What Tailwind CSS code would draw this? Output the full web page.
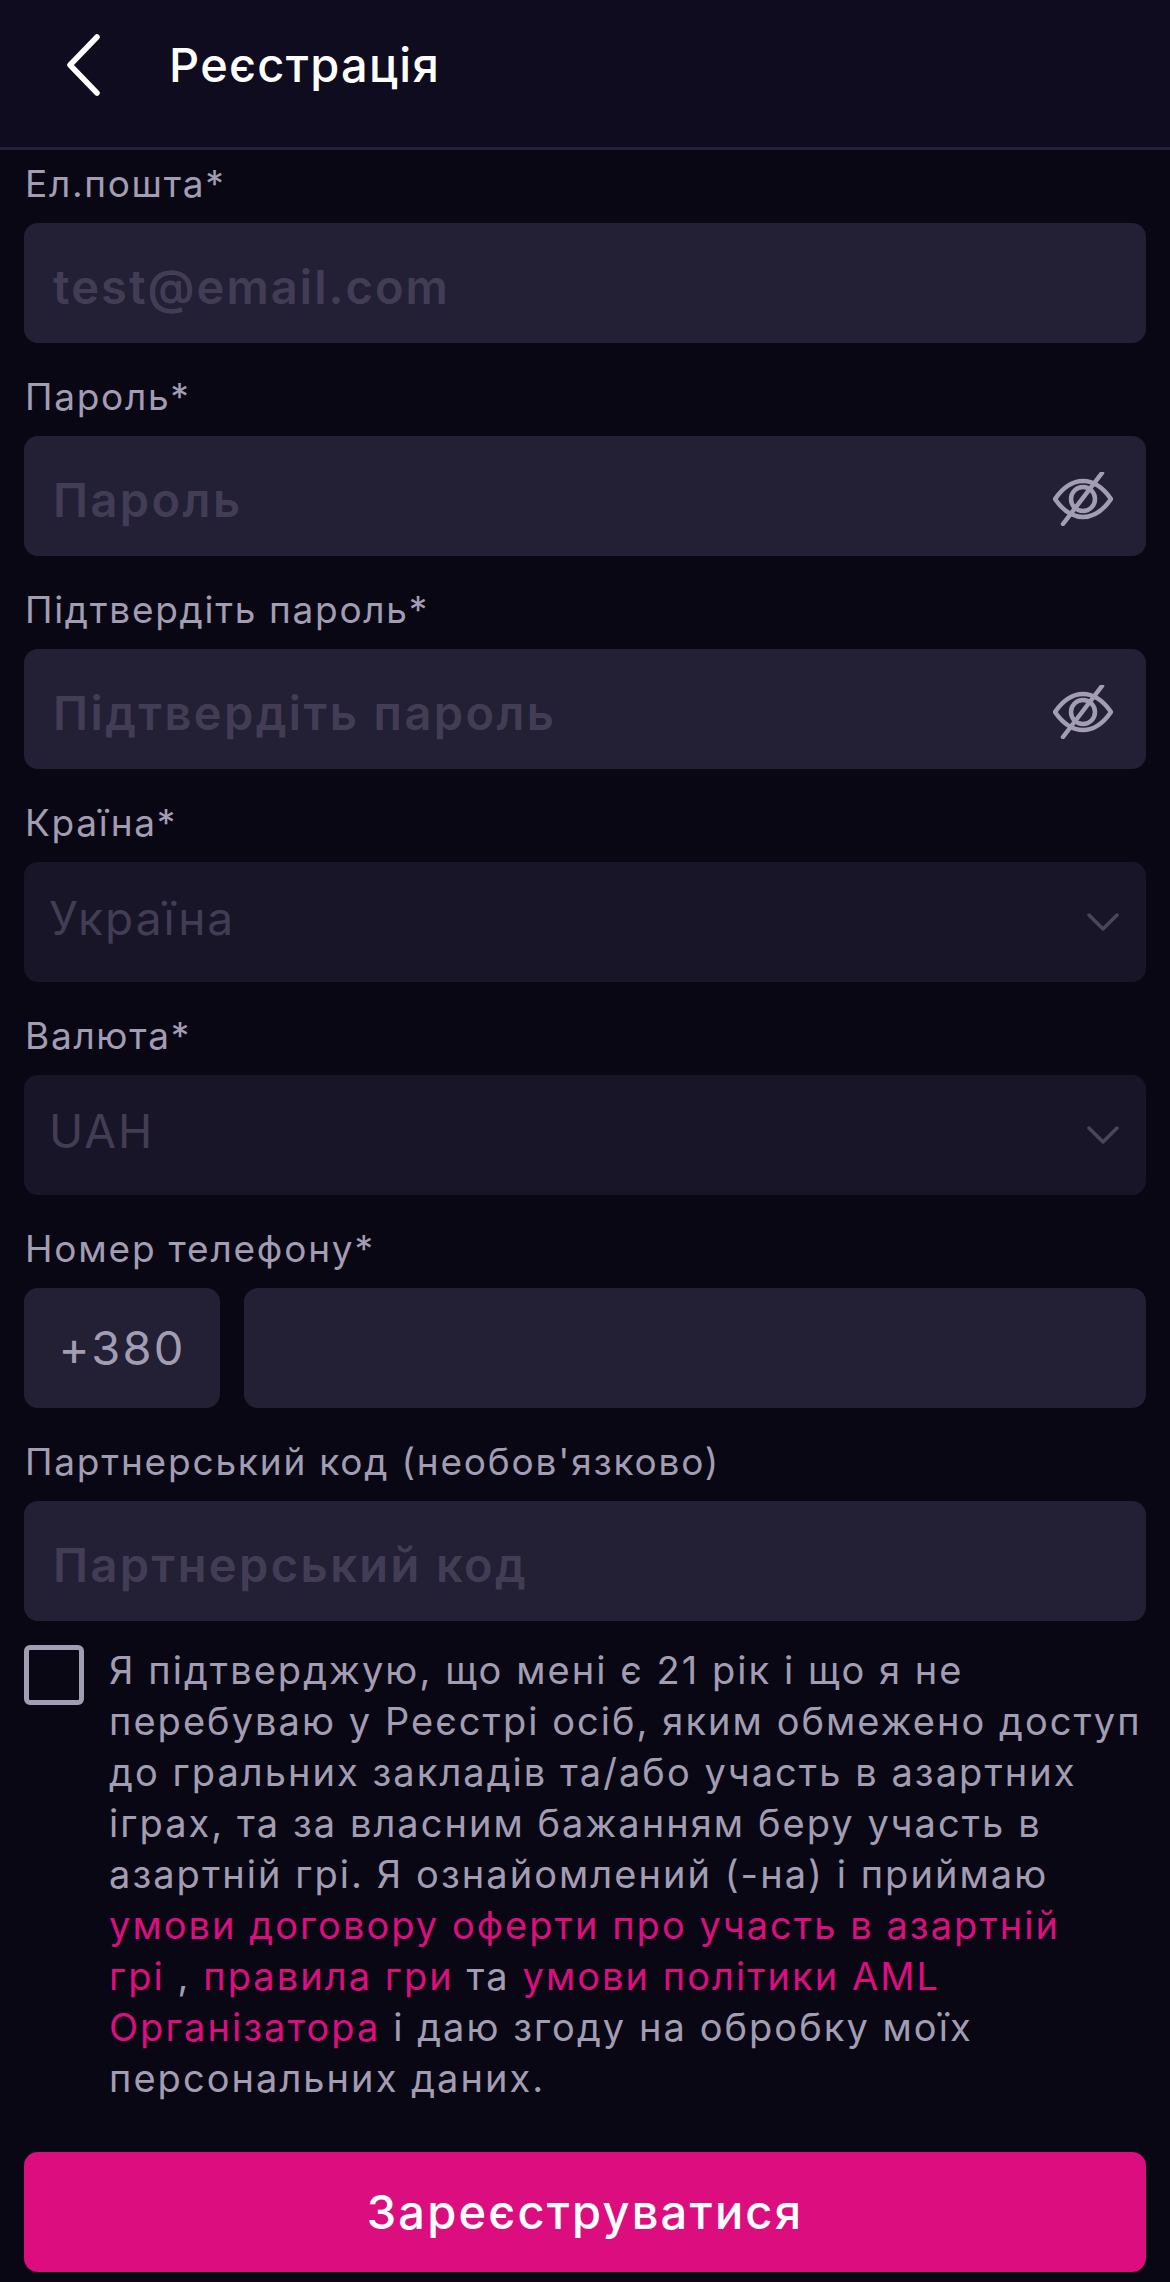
<!DOCTYPE html>
<html lang="uk">
<head>
<meta charset="utf-8">
<script src="https://cdn.jsdelivr.net/npm/@tailwindcss/browser@4"></script>
</head>
<body class="bg-[#0a0715] font-['Inter','Noto_Sans',sans-serif]">
<div class="w-[1170px] h-[2282px] overflow-hidden flex flex-col">
  <header class="h-[150px] shrink-0 bg-[#100c20] border-b-[3px] border-[#26213a] flex items-center pl-[66px] pb-[18px]">
    <svg class="w-[34px] h-[62px] shrink-0" viewBox="0 0 34 62" fill="none"><path d="M31 3 L4 31 L31 59" stroke="#fff" stroke-width="5.5" stroke-linecap="round" stroke-linejoin="round"/></svg>
    <h1 class="ml-[69px] text-[47px] leading-[56px] font-medium text-white tracking-[1.3px]">Реєстрація</h1>
  </header>
  <main class="flex flex-col px-[24px] pt-[11px]">
    <div class="flex flex-col gap-[16px] mb-[31px]">
      <label class="h-[46px] pl-[1px] text-[37px] leading-[46px] text-[#a29db2] tracking-[1.7px]">Ел.пошта*</label>
      <div class="h-[120px] rounded-[14px] bg-[#231f35] flex items-center px-[29px] pt-[8px] text-[47px] font-semibold tracking-[2.05px] text-[#423d55]">test@email.com</div>
    </div>
    <div class="flex flex-col gap-[16px] mb-[31px]">
      <label class="h-[46px] pl-[1px] text-[37px] leading-[46px] text-[#a29db2] tracking-[1.7px]">Пароль*</label>
      <div class="h-[120px] rounded-[14px] bg-[#231f35] flex items-center justify-between pl-[29px] pr-[33px] text-[47px] font-semibold tracking-[2.4px] text-[#423d55]"><span class="pt-[8px]">Пароль</span>
        <svg class="w-[60px] h-[54px] mt-[6px]" viewBox="0 0 60 54" fill="none" stroke="#a29db2" stroke-width="4.5" stroke-linecap="round" stroke-linejoin="round"><path d="M2 27 C11 14 20 9 30 9 C40 9 49 14 58 27 C49 40 40 45 30 45 C20 45 11 40 2 27Z"/><circle cx="30" cy="27" r="12"/><path d="M49 1 L10 52"/></svg>
      </div>
    </div>
    <div class="flex flex-col gap-[16px] mb-[31px]">
      <label class="h-[46px] pl-[1px] text-[37px] leading-[46px] text-[#a29db2] tracking-[1.7px]">Підтвердіть пароль*</label>
      <div class="h-[120px] rounded-[14px] bg-[#231f35] flex items-center justify-between pl-[29px] pr-[33px] text-[47px] font-semibold tracking-[2.4px] text-[#423d55]"><span class="pt-[8px]">Підтвердіть пароль</span>
        <svg class="w-[60px] h-[54px] mt-[6px]" viewBox="0 0 60 54" fill="none" stroke="#a29db2" stroke-width="4.5" stroke-linecap="round" stroke-linejoin="round"><path d="M2 27 C11 14 20 9 30 9 C40 9 49 14 58 27 C49 40 40 45 30 45 C20 45 11 40 2 27Z"/><circle cx="30" cy="27" r="12"/><path d="M49 1 L10 52"/></svg>
      </div>
    </div>
    <div class="flex flex-col gap-[16px] mb-[31px]">
      <label class="h-[46px] pl-[1px] text-[37px] leading-[46px] text-[#a29db2] tracking-[1.7px]">Країна*</label>
      <div class="h-[120px] rounded-[14px] bg-[#191528] flex items-center justify-between pl-[25px] pr-[27px] text-[46px] tracking-[2px] text-[#423d55]"><span class="pb-[7px]">Україна</span>
        <svg class="w-[32px] h-[20px]" viewBox="0 0 32 20" fill="none" stroke="#4a4559" stroke-width="3.5" stroke-linecap="round" stroke-linejoin="round"><path d="M2 3 L16 17 L30 3"/></svg>
      </div>
    </div>
    <div class="flex flex-col gap-[16px] mb-[31px]">
      <label class="h-[46px] pl-[1px] text-[37px] leading-[46px] text-[#a29db2] tracking-[1.7px]">Валюта*</label>
      <div class="h-[120px] rounded-[14px] bg-[#191528] flex items-center justify-between pl-[25px] pr-[27px] text-[46px] tracking-[2px] text-[#423d55]"><span class="pb-[7px]">UAH</span>
        <svg class="w-[32px] h-[20px]" viewBox="0 0 32 20" fill="none" stroke="#4a4559" stroke-width="3.5" stroke-linecap="round" stroke-linejoin="round"><path d="M2 3 L16 17 L30 3"/></svg>
      </div>
    </div>
    <div class="flex flex-col gap-[16px] mb-[31px]">
      <label class="h-[46px] pl-[1px] text-[37px] leading-[46px] text-[#a29db2] tracking-[1.8px]">Номер телефону*</label>
      <div class="flex gap-[24px]">
        <div class="w-[196px] h-[120px] rounded-[14px] bg-[#231f35] flex items-center justify-center text-[47px] tracking-[2.2px] text-[#a29db2]">+380</div>
        <div class="flex-1 h-[120px] rounded-[14px] bg-[#231f35]"></div>
      </div>
    </div>
    <div class="flex flex-col gap-[16px] mb-[24px]">
      <label class="h-[46px] pl-[1px] text-[37px] leading-[46px] text-[#a29db2] tracking-[1.8px]">Партнерський код (необов'язково)</label>
      <div class="h-[120px] rounded-[14px] bg-[#231f35] flex items-center px-[29px] text-[47px] font-semibold tracking-[2.4px] text-[#423d55]"><span class="pt-[8px]">Партнерський код</span></div>
    </div>
    <div class="flex gap-[25px] mb-[48px]">
      <div class="w-[60px] h-[60px] shrink-0 rounded-[6px] border-[5px] border-[#a29db2]"></div>
      <p class="text-[38px] leading-[51px] text-[#a29db2] tracking-[2.05px]">Я підтверджую, що мені є 21 рік і що я не перебуваю у Реєстрі осіб, яким обмежено доступ до гральних закладів та/або участь в азартних іграх, та за власним бажанням беру участь в азартній грі. Я ознайомлений (-на) і приймаю <span class="text-[#dc0e7f]">умови договору оферти про участь в азартній<br>грі</span> , <span class="text-[#dc0e7f]">правила гри</span> та <span class="text-[#dc0e7f]">умови політики AML Організатора</span> і даю згоду на обробку моїх персональних даних.</p>
    </div>
    <button class="h-[120px] rounded-[14px] bg-[#dc0e7f] text-white text-[47px] font-medium tracking-[2.2px]">Зареєструватися</button>
  </main>
</div>
</body>
</html>
